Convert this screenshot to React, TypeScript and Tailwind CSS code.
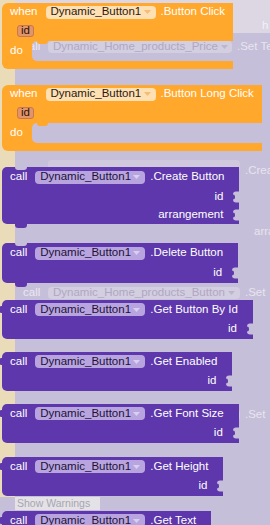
import React from "react";

function Arrow({ color }: { color: string }) {
  return (
    <svg width="7" height="4" viewBox="0 0 7 4" className="shrink-0">
      <path d="M0 0 L7 0 L3.5 4 Z" fill={color} />
    </svg>
  );
}

function OrangePill() {
  return (
    <div className="flex items-center justify-between w-[110px] h-[13px] rounded-[4px] bg-[#fee0b3] pl-[5px] pr-[5px] text-[#2b1a14]">
      <span>Dynamic_Button1</span>
      <Arrow color="#f5bb78" />
    </div>
  );
}

function PurplePill() {
  return (
    <div className="flex items-center justify-between w-[110px] h-[13px] rounded-[4px] bg-[#b8a5e0] pl-[5px] pr-[5px] text-[#1e1238]">
      <span>Dynamic_Button1</span>
      <Arrow color="#d9cff0" />
    </div>
  );
}

function EventBlock({ label, extra }: { label: string; extra: string }) {
  return (
    <div className={`flex flex-col ${extra}`}>
      <div className="bg-[#ffa82b] rounded-tl-[6px]">
        <div className="flex items-center h-[18px] pl-[8px] pr-[8px] whitespace-nowrap">
          <span className="text-white mr-[8px]">when</span>
          <OrangePill />
          <span className="text-white ml-[5px]">{label}</span>
        </div>
        <div className="flex items-center h-[20px] pl-[15px]">
          <div className="flex items-center justify-center w-[17px] h-[12px] rounded-[3px] bg-[#e2946a] border border-[#c9774b] text-[#2b1208]">
            id
          </div>
        </div>
      </div>
      <div className="flex h-[20px] overflow-hidden">
        <div className="w-[30px] bg-[#ffa82b] flex items-center pl-[8px] text-white">do</div>
        <div className="relative flex-1 rounded-l-[5px] shadow-[0_0_0_8px_#ffa82b]">
          <div className="absolute left-[5px] top-0 w-[11px] h-[3px] bg-[#ffa82b] rounded-b-[3px]" />
        </div>
      </div>
      <div className="h-[8px] bg-[#ffa82b] rounded-bl-[6px]" />
    </div>
  );
}

function Socket() {
  return (
    <div className="absolute right-0 top-1/2 -translate-y-1/2 w-[6px] h-[11px] bg-[#c6bfd9] rounded-l-[3px]">
      <div className="absolute left-0 top-[3px] w-[2px] h-[5px] bg-[#5d37ab] rounded-r-[2px]" />
    </div>
  );
}

function CallBlock({
  method,
  inputs,
  rows,
  statement,
  extra,
}: {
  method: string;
  inputs: string[];
  rows: string[];
  statement: boolean;
  extra: string;
}) {
  return (
    <div className={`relative bg-[#5d37ab] rounded-l-[5px] ${extra}`}>
      {statement ? (
        <>
          <div className="absolute top-0 left-[13px] w-[12px] h-[3px] bg-[#c6bfd9] rounded-b-[3px]" />
          <div className="absolute -bottom-[4px] left-[13px] w-[12px] h-[4px] bg-[#5d37ab] rounded-b-[3px]" />
        </>
      ) : (
        <div className="absolute -left-[2px] top-[6px] w-[3px] h-[7px] bg-[#5d37ab] rounded-l-[1px]" />
      )}
      <div className={`flex items-center pl-[8px] pr-[15px] whitespace-nowrap ${rows[0]}`}>
        <span className="text-white mr-[8px]">call</span>
        <PurplePill />
        <span className="text-white ml-[5px]">{method}</span>
      </div>
      {inputs.map((inp, i) => (
        <div
          key={inp}
          className={`relative flex items-center justify-end pr-[16px] text-white ${rows[i + 1]}`}
        >
          <span>{inp}</span>
          <Socket />
        </div>
      ))}
    </div>
  );
}

export default function App() {
  return (
    <div className="relative w-[270px] h-[525px] overflow-hidden bg-[#c6bfd9] font-['Liberation_Sans',Arial,sans-serif] text-[11.5px] leading-none">
      {/* background workspace, faded */}
      <div className="absolute left-0 top-0 w-[270px] h-[33px] bg-[#dcd7e3]" />
      <div className="absolute left-0 top-0 w-[15px] h-[497px] bg-[#eadcb9]" />
      <div className="absolute left-[262px] top-[19px] h-[14px] flex items-center text-[#f3f1f6]">h</div>

      <div className="absolute left-[23px] top-[40px] h-[14px] flex items-center text-[#ebe7f2]">call</div>
      <div className="absolute left-[48px] top-[41px] w-[184px] h-[12px] rounded-[4px] bg-[#d4cee1] flex items-center justify-between pl-[5px] pr-[4px] text-[#afa8c2]">
        <span>Dynamic_Home_products_Price</span>
        <Arrow color="#bdb6cf" />
      </div>
      <div className="absolute left-[237px] top-[40px] h-[14px] flex items-center text-[#e8e4ef] whitespace-nowrap">.Set Te</div>

      <div className="absolute left-[48px] top-[160px] w-[192px] h-[12px] rounded-[4px] bg-[#d0c9de]" />
      <div className="absolute left-[245px] top-[164px] h-[14px] flex items-center text-[#e8e4ef]">.Crea</div>
      <div className="absolute left-[254px] top-[225px] h-[14px] flex items-center text-[#e8e4ef]">arra</div>

      <div className="absolute left-[23px] top-[286px] h-[14px] flex items-center text-[#ebe7f2]">call</div>
      <div className="absolute left-[48px] top-[287px] w-[192px] h-[12px] rounded-[4px] bg-[#d4cee1] flex items-center justify-between pl-[5px] pr-[5px] text-[#afa8c2]">
        <span>Dynamic_Home_products_Button</span>
        <Arrow color="#bdb6cf" />
      </div>
      <div className="absolute left-[245px] top-[286px] h-[14px] flex items-center text-[#e8e4ef]">.Set</div>

      <div className="absolute left-[48px] top-[409px] w-[192px] h-[12px] rounded-[4px] bg-[#d4cee1]" />
      <div className="absolute left-[245px] top-[408px] h-[14px] flex items-center text-[#e8e4ef]">.Set</div>

      <div className="absolute left-[15px] top-[497px] w-[85px] h-[13px] bg-[#e4e2e7] flex items-center pl-[2px] text-[10.5px] text-[#a8a5b0] whitespace-nowrap">
        Show Warnings
      </div>

      {/* flyout blocks */}
      <div className="relative flex flex-col items-start pl-[2px] pt-[3px]">
        <EventBlock label=".Button Click" extra="" />
        <EventBlock label=".Button Long Click" extra="mt-[16px]" />
        <CallBlock
          method=".Create Button"
          inputs={["id", "arrangement"]}
          rows={["h-[20px]", "h-[19px]", "h-[18px]"]}
          statement
          extra="mt-[16px]"
        />
        <CallBlock
          method=".Delete Button"
          inputs={["id"]}
          rows={["h-[20px]", "h-[20px]"]}
          statement
          extra="mt-[19px]"
        />
        <CallBlock
          method=".Get Button By Id"
          inputs={["id"]}
          rows={["h-[19px]", "h-[20px]"]}
          statement={false}
          extra="mt-[17px]"
        />
        <CallBlock
          method=".Get Enabled"
          inputs={["id"]}
          rows={["h-[19px]", "h-[20px]"]}
          statement={false}
          extra="mt-[13px]"
        />
        <CallBlock
          method=".Get Font Size"
          inputs={["id"]}
          rows={["h-[19px]", "h-[20px]"]}
          statement={false}
          extra="mt-[13px]"
        />
        <CallBlock
          method=".Get Height"
          inputs={["id"]}
          rows={["h-[19px]", "h-[20px]"]}
          statement={false}
          extra="mt-[14px]"
        />
        <CallBlock
          method=".Get Text"
          inputs={["id"]}
          rows={["h-[19px]", "h-[20px]"]}
          statement={false}
          extra="mt-[15px]"
        />
      </div>
    </div>
  );
}
